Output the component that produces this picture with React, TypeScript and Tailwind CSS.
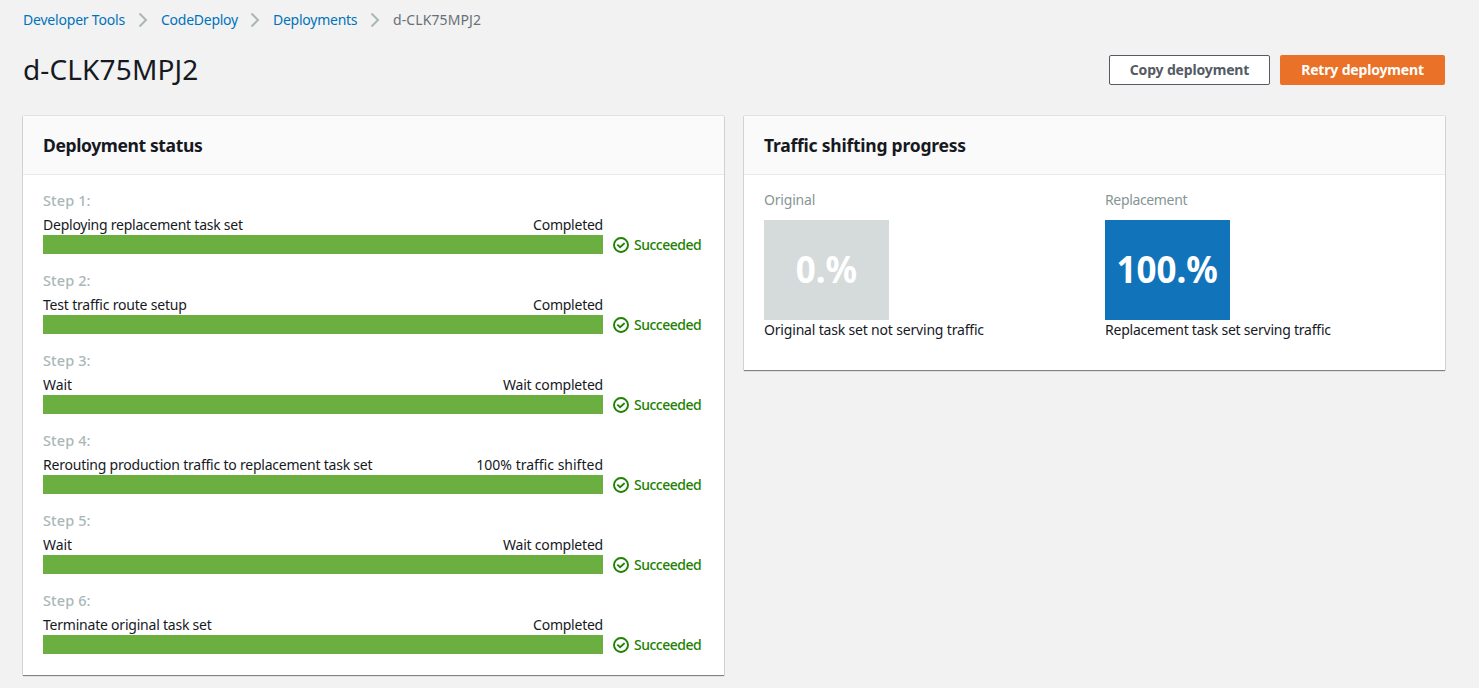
import React from "react";

type Step = { name: string; note: string; nameTracking: string; noteTracking: string };

const steps: Step[] = [
  { name: "Deploying replacement task set", note: "Completed", nameTracking: "tracking-[-0.24px]", noteTracking: "tracking-[-0.24px]" },
  { name: "Test traffic route setup", note: "Completed", nameTracking: "tracking-[-0.19px]", noteTracking: "tracking-[-0.24px]" },
  { name: "Wait", note: "Wait completed", nameTracking: "tracking-[-0.1px]", noteTracking: "tracking-[-0.2px]" },
  { name: "Rerouting production traffic to replacement task set", note: "100% traffic shifted", nameTracking: "tracking-[-0.22px]", noteTracking: "tracking-normal" },
  { name: "Wait", note: "Wait completed", nameTracking: "tracking-[-0.1px]", noteTracking: "tracking-[-0.2px]" },
  { name: "Terminate original task set", note: "Completed", nameTracking: "tracking-[-0.22px]", noteTracking: "tracking-[-0.24px]" },
];

function Chevron({ className }: { className: string }) {
  return (
    <svg className={className} width="10" height="16" viewBox="0 0 10 16" fill="none" stroke="#aab7b8" strokeWidth="2">
      <path d="M1.5 1.5 8 8l-6.5 6.5" />
    </svg>
  );
}

function SuccessIcon() {
  return (
    <svg width="16" height="16" viewBox="0 0 16 16" fill="none" stroke="#1d8102" strokeWidth="1.9">
      <circle cx="8" cy="8" r="7" />
      <path d="m4.3 7.6 2.8 2.6 4.5-4.1" />
    </svg>
  );
}

function Card({ title, titleClass, children }: { title: string; titleClass: string; children: React.ReactNode }) {
  return (
    <section className="w-[701px] bg-white shadow-[0_1px_1px_0_rgba(0,0,0,0.42),0_0_1px_0_rgba(0,0,0,0.4)]">
      <header className="flex h-[59px] items-center border-b border-[#e8eaea] bg-[#fafafa] px-5">
        <h2 className={`text-[17.5px] leading-[22px] font-bold ${titleClass}`}>{title}</h2>
      </header>
      {children}
    </section>
  );
}

function StepRow({ step, index }: { step: Step; index: number }) {
  return (
    <div className="h-20">
      <div className="pb-px text-[14.5px] leading-6 font-medium tracking-[0.1px] text-[#aab7b8]">Step {index + 1}:</div>
      <div className="flex h-[22px] w-[560px] justify-between pt-px text-[14px] leading-[22px]">
        <span className={step.nameTracking}>{step.name}</span>
        <span className={step.noteTracking}>{step.note}</span>
      </div>
      <div className="flex">
        <div className="h-[19px] w-[560px] bg-[#6aaf3f]" />
        <div className="ml-2.5 flex h-5 items-center gap-[5px] text-[14px] leading-5 font-medium tracking-[-0.5px] text-[#1d8102]">
          <SuccessIcon />
          <span>Succeeded</span>
        </div>
      </div>
    </div>
  );
}

export default function App() {
  return (
    <main className="h-[688px] w-[1479px] overflow-hidden bg-[#f2f2f2] pl-[23px] font-['Noto_Sans',sans-serif] text-[14px] text-[#16191f]">
      <nav className="flex h-10 items-center leading-5 text-[#0073bb]">
        <a className="w-[115px] tracking-[-0.2px]">Developer Tools</a>
        <Chevron className="mr-[13px]" />
        <a className="w-[89px] tracking-[-0.26px]">CodeDeploy</a>
        <Chevron className="mr-[13px]" />
        <a className="w-[97px] tracking-[-0.25px]">Deployments</a>
        <Chevron className="mr-[13px]" />
        <span className="tracking-[0.1px] text-[#687078]">d-CLK75MPJ2</span>
      </nav>
      <div className="flex h-[60px] w-[1422px] items-center">
        <h1 className="flex-1 pb-0.5 text-[28px] leading-9 tracking-[0.13px]">d-CLK75MPJ2</h1>
        <button className="h-[30px] w-[161px] rounded-[2px] border border-[#545b64] bg-white pb-0.5 font-bold tracking-[-0.16px] text-[#545b64]">Copy deployment</button>
        <button className="ml-2.5 h-[30px] w-[165px] rounded-[2px] bg-[#ea7228] pb-0.5 font-bold tracking-[-0.17px] text-white">Retry deployment</button>
      </div>
      <div className="flex items-start gap-5 pt-4">
        <Card title="Deployment status" titleClass="tracking-[-0.38px]">
          <div className="h-[500px] px-5 pt-[13px]">
            {steps.map((step, i) => (
              <StepRow key={i} step={step} index={i} />
            ))}
          </div>
        </Card>
        <Card title="Traffic shifting progress" titleClass="tracking-[-0.23px]">
          <div className="flex h-[195px] px-5 pt-[15px]">
            <div className="w-[341px]">
              <div className="leading-5 tracking-[-0.2px] text-[#879596]">Original</div>
              <div className="mt-2.5 flex h-[100px] w-[125px] items-center justify-center bg-[#d5dbdb] pb-1 text-[38px] font-bold text-white">
                <span className="scale-x-[0.92]">0.%</span>
              </div>
              <div className="leading-5 tracking-[-0.18px]">Original task set not serving traffic</div>
            </div>
            <div>
              <div className="leading-5 tracking-[-0.35px] text-[#879596]">Replacement</div>
              <div className="mt-2.5 flex h-[100px] w-[125px] items-center justify-center bg-[#1174bb] pb-1 text-[38px] font-bold text-white">
                <span className="scale-x-[0.92]">100.%</span>
              </div>
              <div className="leading-5 tracking-[-0.23px]">Replacement task set serving traffic</div>
            </div>
          </div>
        </Card>
      </div>
    </main>
  );
}
